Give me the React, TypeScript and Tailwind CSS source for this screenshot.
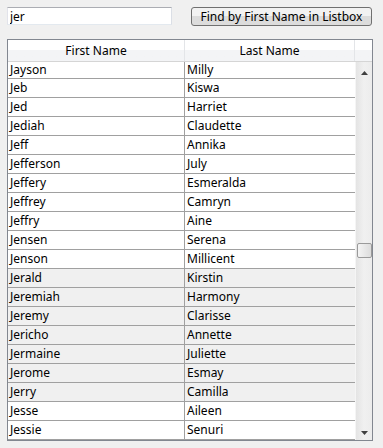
import React from "react";

const people: [string, string][] = [
  ["Jayson", "Milly"],
  ["Jeb", "Kiswa"],
  ["Jed", "Harriet"],
  ["Jediah", "Claudette"],
  ["Jeff", "Annika"],
  ["Jefferson", "July"],
  ["Jeffery", "Esmeralda"],
  ["Jeffrey", "Camryn"],
  ["Jeffry", "Aine"],
  ["Jensen", "Serena"],
  ["Jenson", "Millicent"],
  ["Jerald", "Kirstin"],
  ["Jeremiah", "Harmony"],
  ["Jeremy", "Clarisse"],
  ["Jericho", "Annette"],
  ["Jermaine", "Juliette"],
  ["Jerome", "Esmay"],
  ["Jerry", "Camilla"],
  ["Jesse", "Aileen"],
  ["Jessie", "Senuri"],
];

const query = "jer";

export default function App() {
  return (
    <div className="w-[383px] h-[448px] bg-[#f0f0f0] text-[12px] text-black font-['Noto_Sans',sans-serif] overflow-hidden">
      <div className="flex pt-[7px] pl-[7px]">
        <input
          className="w-[165px] h-[18px] bg-white border border-[#abadb3] border-l-[#e2e3ea] border-r-[#dbdfe6] border-b-[#e3e9ef] px-[2px] leading-[16px] outline-none"
          defaultValue={query}
        />
        <button className="ml-[19px] w-[181px] h-[19px] rounded-[3px] border border-[#707070] bg-gradient-to-b from-[#f2f2f2] from-50% to-[#dcdcdc] to-50% leading-[16px]">
          Find by First Name in Listbox
        </button>
      </div>

      <div className="mt-[13px] ml-[7px] w-[366px] h-[402px] border border-[#828790] bg-white flex flex-col">
        <div className="flex h-[22px] border-b border-[#d5d5d5] bg-gradient-to-b from-white from-50% to-[#f3f4f6] to-50%">
          <div className="w-[177px] border-r border-[#e3e5e8] flex items-center justify-center">First Name</div>
          <div className="w-[170px] border-r border-[#e3e5e8] flex items-center justify-center">Last Name</div>
          <div className="flex-1" />
        </div>

        <div className="flex flex-1 overflow-hidden">
          <div className="w-[347px] overflow-hidden">
            {people.map(([first, last], i) => {
              const hit = first.toLowerCase().startsWith(query);
              return (
                <div
                  key={first}
                  className={`flex border-b border-[#a0a0a0] ${i === 0 ? "h-[17px] leading-[16px]" : "h-[19px] leading-[18px]"} ${hit ? "bg-[#f0f0f0]" : "bg-white"}`}
                >
                  <div className="w-[177px] border-r border-[#a0a0a0] pl-[2px] whitespace-nowrap">{first}</div>
                  <div className="flex-1 pl-[2px] whitespace-nowrap">{last}</div>
                </div>
              );
            })}
          </div>

          <div className="w-[17px] bg-gradient-to-r from-[#e4e4e4] via-[#f0f0f0] to-[#ececec] border-l border-[#f5f5f5] flex flex-col items-center">
            <svg width="7" height="4" viewBox="0 0 7 4" className="mt-[9px]">
              <path d="M3.5 0 L7 4 L0 4 Z" fill="#404040" />
            </svg>
            <div className="mt-[168px] w-[15px] h-[15px] rounded-[2px] border border-[#9a9a9a] bg-gradient-to-r from-[#f4f4f4] to-[#dcdcdc]" />
            <div className="flex-1" />
            <svg width="7" height="4" viewBox="0 0 7 4" className="mb-[5px]">
              <path d="M0 0 L7 0 L3.5 4 Z" fill="#404040" />
            </svg>
          </div>
        </div>
      </div>
    </div>
  );
}
